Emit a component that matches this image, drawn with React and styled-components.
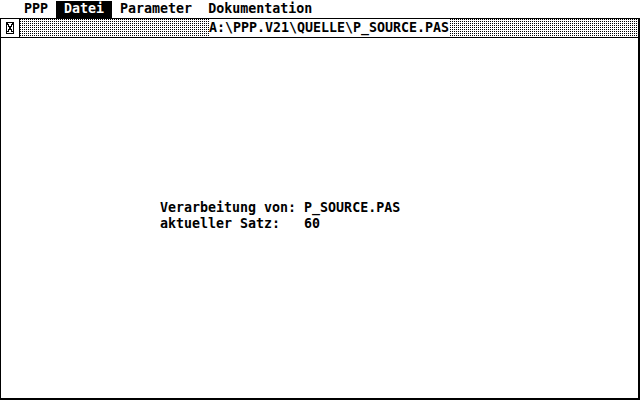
import styled, { createGlobalStyle } from 'styled-components'

const GlobalStyle = createGlobalStyle`
  html, body {
    margin: 0;
    padding: 0;
    background: #FFFFFF;
    overflow: hidden;
  }
`

const mono = `"DejaVu Sans Mono", "Liberation Mono", monospace`

const Screen = styled.div`
  width: 640px;
  height: 400px;
  display: flex;
  flex-direction: column;
  background: #FFFFFF;
  color: #000000;
  font-family: ${mono};
  font-weight: bold;
  font-size: 13.3px;
  box-sizing: border-box;
`

const MenuBar = styled.div`
  height: 18px;
  flex: none;
  display: flex;
  padding-left: 16px;
  border-bottom: 1px solid #000000;
`

const MenuTitle = styled.div`
  height: 17px;
  margin-top: 1px;
  padding: 0 8px;
  line-height: 16px;
  white-space: pre;
  background: ${p => (p.$active ? '#000000' : 'transparent')};
  color: ${p => (p.$active ? '#FFFFFF' : '#000000')};
`

const Window = styled.div`
  flex: 1;
  display: flex;
  flex-direction: column;
  border-left: 1px solid #000000;
  border-right: 2px solid #000000;
  border-bottom: 2px solid #000000;
`

const TitleBar = styled.div`
  height: 18px;
  flex: none;
  display: flex;
  border-bottom: 1px solid #000000;
`

const CloseBox = styled.div`
  width: 18px;
  flex: none;
  display: flex;
  align-items: center;
  justify-content: center;
  border-right: 1px solid #000000;
`

const TitleArea = styled.div`
  flex: 1;
  display: flex;
  align-items: center;
  justify-content: center;
  background-color: #000000;
  background-image:
    linear-gradient(to right, transparent 1px, #FFFFFF 1px),
    linear-gradient(to bottom, transparent 1px, #FFFFFF 1px);
  background-size: 2px 2px;
`

const TitleText = styled.div`
  background: #FFFFFF;
  height: 18px;
  line-height: 18px;
  white-space: pre;
`

const WorkArea = styled.div`
  flex: 1;
  padding: 162px 0 0 159px;
`

const Line = styled.div`
  height: 16px;
  line-height: 16px;
  white-space: pre;
`

// Atari-style close glyph: a narrow box with crossed diagonals
function CloseIcon() {
  return (
    <svg width="8" height="12" viewBox="0 0 8 12" shapeRendering="crispEdges">
      <path d="M0 0.5 H8 M0 11.5 H8 M0.5 0 V12 M7.5 0 V12" stroke="#000" fill="none" />
      <path d="M1.5 1.5 L6.5 10.5 M6.5 1.5 L1.5 10.5" stroke="#000" strokeWidth="1.5" fill="none" />
    </svg>
  )
}

function App() {
  return (
    <>
      <GlobalStyle />
      <Screen>
        <MenuBar>
          <MenuTitle>PPP</MenuTitle>
          <MenuTitle $active>Datei</MenuTitle>
          <MenuTitle>Parameter</MenuTitle>
          <MenuTitle>Dokumentation</MenuTitle>
        </MenuBar>
        <Window>
          <TitleBar>
            <CloseBox>
              <CloseIcon />
            </CloseBox>
            <TitleArea>
              <TitleText>A:\PPP.V21\QUELLE\P_SOURCE.PAS</TitleText>
            </TitleArea>
          </TitleBar>
          <WorkArea>
            <Line>Verarbeitung von: P_SOURCE.PAS</Line>
            <Line>aktueller Satz:   60</Line>
          </WorkArea>
        </Window>
      </Screen>
    </>
  )
}

export default App
